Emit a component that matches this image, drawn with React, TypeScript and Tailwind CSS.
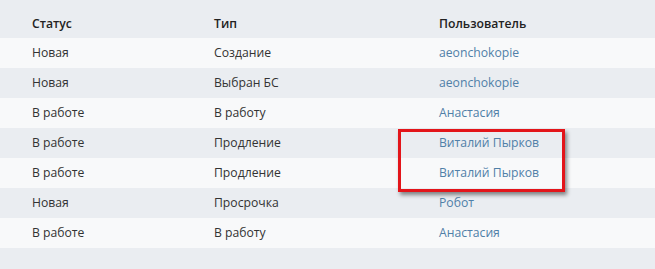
import React from "react";

const rows = [
  ["Новая", "Создание", "aeonchokopie"],
  ["Новая", "Выбран БС", "aeonchokopie"],
  ["В работе", "В работу", "Анастасия"],
  ["В работе", "Продление", "Виталий Пырков"],
  ["В работе", "Продление", "Виталий Пырков"],
  ["Новая", "Просрочка", "Робот"],
  ["В работе", "В работу", "Анастасия"],
];

export default function App() {
  return (
    <div
      className="relative w-[655px] h-[269px] bg-[#eaedf1] text-[12.2px] text-[#333333] overflow-hidden"
      style={{ fontFamily: '"Open Sans", "Noto Sans", sans-serif' }}
    >
      <div className="grid grid-cols-[182px_225px_1fr] pl-[32px] h-[38px] pt-[10px] items-center font-semibold text-[#222222]">
        <div>Статус</div>
        <div>Тип</div>
        <div>Пользователь</div>
      </div>
      {rows.map((r, i) => (
        <div
          key={i}
          className={
            "grid grid-cols-[182px_225px_1fr] pl-[32px] h-[30px] items-center " +
            (i % 2 === 0 ? "bg-[#f8f9fa]" : "bg-[#eaedf1]")
          }
        >
          <div>{r[0]}</div>
          <div>{r[1]}</div>
          <div className="text-[#5080a8]">{r[2]}</div>
        </div>
      ))}
      <div className="absolute left-[398px] top-[129px] w-[167px] h-[63px] border-[3px] border-[#e3151a] shadow-[2px_3px_4px_rgba(0,0,0,0.45)]" />
    </div>
  );
}
